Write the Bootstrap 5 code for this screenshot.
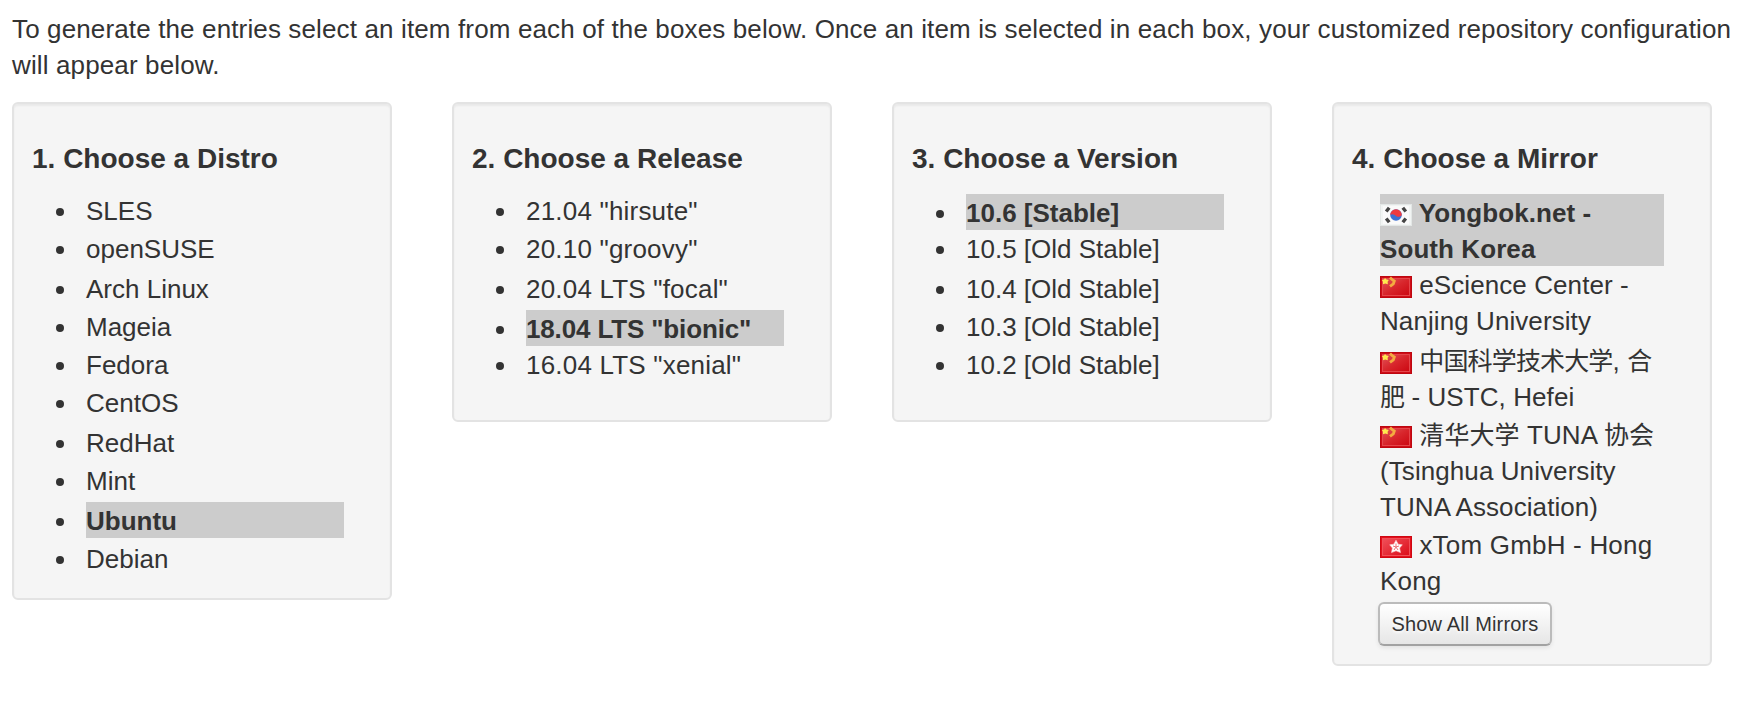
<!DOCTYPE html>
<html lang="en">
<head>
  <meta charset="UTF-8">
  <meta name="viewport" content="width=device-width, initial-scale=1.0">
  <title>Repository Configuration</title>
  <link href="https://cdn.jsdelivr.net/npm/bootstrap@5.3.0/dist/css/bootstrap.min.css" rel="stylesheet">
  <style>
    body {
      font-family: "Liberation Sans", "Noto Sans CJK SC", sans-serif;
      font-size: 26px;
      line-height: 36px;
      color: #333;
      background: #fff;
    }

    .intro {
      padding: 11px 12px 0;
      margin-bottom: 19px;
      letter-spacing: .133px;
    }

    .chooser {
      padding-left: 12px;
      padding-right: 48px;
    }

    .well {
      min-height: 320px;
      padding: 37px 46px 20px 18px;
      background: #f5f5f5;
      border: 2px solid #e3e3e3;
      border-radius: 6px;
      box-shadow: inset 0 2px 2px rgba(0, 0, 0, .05);
    }

    .well h3 {
      font-size: 28px;
      line-height: 36px;
      font-weight: bold;
      margin: 0 -40px 15px 0;
      white-space: nowrap;
    }

    .choices {
      padding-left: 24px;
    }

    .choices li {
      height: 38px;
    }

    .choices li:nth-child(2),
    .choices li:nth-child(6),
    .choices li:nth-child(9) {
      height: 40px;
    }

    .choices li::before {
      content: "";
      width: 8px;
      height: 8px;
      margin: 16px 22px 0 0;
      border-radius: 50%;
      background: #333;
    }

    .choices span {
      height: 36px;
      padding-top: 1px;
      white-space: nowrap;
    }

    .choices .picked {
      padding-top: 2px;
    }

    .picked span,
    .mirrors .picked {
      background: #ccc;
      font-weight: bold;
    }

    .releases {
      letter-spacing: .2px;
    }

    .releases .picked {
      letter-spacing: -.15px;
    }

    .mirrors {
      padding: 2px 0 0 28px;
      margin-bottom: 4px;
      letter-spacing: .08px;
    }

    .mirrors li {
      height: 72px;
      padding-top: 1px;
    }

    .mirrors .nju { height: 76px; }
    .mirrors .ustc { height: 74px; }
    .mirrors .tuna { height: 110px; }
    .mirrors .xtom { letter-spacing: .2px; }

    .flag {
      width: 32px;
      height: 22px;
      vertical-align: -4px;
    }

    .soft {
      filter: blur(.6px);
    }

    .han {
      font-family: "Noto Sans CJK SC", sans-serif;
      font-size: 25px;
      line-height: 1;
    }

    .ustc .han {
      letter-spacing: -.85px;
    }

    .tuna .han {
      letter-spacing: .1px;
    }

    .btn-mirrors {
      width: 174px;
      height: 44px;
      margin-left: 26px;
      margin-bottom: 18px;
      padding: 1px 0 0;
      font-size: 20px;
      line-height: 39px;
      letter-spacing: .16px;
      color: #333;
      text-shadow: 0 2px 2px rgba(255, 255, 255, .75);
      background: linear-gradient(#fff, #e6e6e6);
      border: 2px solid #bbb;
      border-bottom-color: #a2a2a2;
      border-radius: 6px;
      box-shadow: 0 2px 4px rgba(0, 0, 0, .08);
    }
  </style>
</head>
<body>

<!-- flag shapes -->
<svg class="position-absolute" width="0" height="0">
  <defs>
    <linearGradient id="redShade" x1="0" y1="0" x2="1" y2="1">
      <stop offset="0" stop-color="#e0555a"/>
      <stop offset=".5" stop-color="#d8262c"/>
      <stop offset="1" stop-color="#cc0812"/>
    </linearGradient>
    <linearGradient id="hkShade" x1="0" y1="0" x2="1" y2="1">
      <stop offset="0" stop-color="#f0505a"/>
      <stop offset="1" stop-color="#dc0c18"/>
    </linearGradient>
  </defs>
  <symbol id="flagKr" viewBox="0 0 32 22">
    <rect width="32" height="22" fill="#e3e7e6"/>
    <rect x="1" y="1" width="30" height="20" fill="#f1f4f3"/>
    <rect x="3" y="2" width="26" height="18" fill="#fafafa"/>
    <g class="soft">
      <path d="M6.200 7.500 9.200 3.800M22.800 3.800l3 3.700M6.200 14.500l3 3.700M22.800 18.200l3-3.700" stroke="#444" stroke-width="3.400"/>
      <circle cx="16" cy="11" r="5.800" fill="#3e70d2"/>
      <path d="M10.200 11a5.800 5.800 0 0 1 11.600 0c-1 1.600-3.600 2.600-5.400 1.200-1.800-1.600-4.600-2.800-6.200-1.200z" fill="#ee3b40"/>
    </g>
  </symbol>
  <symbol id="flagCn" viewBox="0 0 32 22">
    <rect width="32" height="22" fill="#bd0710"/>
    <rect x="1" y="1" width="30" height="20" fill="#cf0d17"/>
    <rect x="2.500" y="2.500" width="27" height="17" fill="url(#redShade)" stroke="#e4474c" stroke-width="1"/>
    <g class="soft">
      <path d="M5 2 6.500 3.500 8.800 4 7.600 5.800 7.800 8.200 5.300 7.600 3 8.200 3 5.800 1.800 4 4 3.500z" fill="#ffe94e"/>
      <path d="M10 1.500 12 3.500 14.300 5 13.300 8 10 10.400" fill="none" stroke="#f4ac40" stroke-width="2.800"/>
    </g>
  </symbol>
  <symbol id="flagHk" viewBox="0 0 32 22">
    <rect width="32" height="22" fill="#cf0712"/>
    <rect x="1" y="1" width="30" height="20" fill="#e3101c"/>
    <rect x="2.500" y="2.500" width="27" height="17" fill="url(#hkShade)" stroke="#f05058" stroke-width="1"/>
    <g class="soft">
      <path d="M16 4.200 18.200 8.200 22.300 8.800 19.600 12 20.500 16.600 16 14.800 11.500 16.600 12.400 12 9.700 8.800 13.800 8.200z" fill="#fff" stroke="#fbd3d4" stroke-width=".6"/>
      <path d="M16 7.500v3.500l3-1M16 11l2 3M16 11l-2 3M16 11l-3-1" fill="none" stroke="#ee7279" stroke-width="1"/>
    </g>
  </symbol>
</svg>

<p class="intro">To generate the entries select an item from each of the boxes below. Once an item is selected in each box, your customized repository configuration will appear below.</p>

<div class="row g-0 align-items-start">
  <div class="col-3 chooser">
    <div class="well">
      <h3>1. Choose a Distro</h3>
      <ul class="choices list-unstyled mb-0">
        <li class="d-flex"><span class="flex-fill">SLES</span></li>
        <li class="d-flex"><span class="flex-fill">openSUSE</span></li>
        <li class="d-flex"><span class="flex-fill">Arch Linux</span></li>
        <li class="d-flex"><span class="flex-fill">Mageia</span></li>
        <li class="d-flex"><span class="flex-fill">Fedora</span></li>
        <li class="d-flex"><span class="flex-fill">CentOS</span></li>
        <li class="d-flex"><span class="flex-fill">RedHat</span></li>
        <li class="d-flex"><span class="flex-fill">Mint</span></li>
        <li class="d-flex picked"><span class="flex-fill">Ubuntu</span></li>
        <li class="d-flex"><span class="flex-fill">Debian</span></li>
      </ul>
    </div>
  </div>

  <div class="col-3 chooser">
    <div class="well">
      <h3>2. Choose a Release</h3>
      <ul class="choices releases list-unstyled mb-0">
        <li class="d-flex"><span class="flex-fill">21.04 "hirsute"</span></li>
        <li class="d-flex"><span class="flex-fill">20.10 "groovy"</span></li>
        <li class="d-flex"><span class="flex-fill">20.04 LTS "focal"</span></li>
        <li class="d-flex picked"><span class="flex-fill">18.04 LTS "bionic"</span></li>
        <li class="d-flex"><span class="flex-fill">16.04 LTS "xenial"</span></li>
      </ul>
    </div>
  </div>

  <div class="col-3 chooser">
    <div class="well">
      <h3>3. Choose a Version</h3>
      <ul class="choices list-unstyled mb-0">
        <li class="d-flex picked"><span class="flex-fill">10.6 [Stable]</span></li>
        <li class="d-flex"><span class="flex-fill">10.5 [Old Stable]</span></li>
        <li class="d-flex"><span class="flex-fill">10.4 [Old Stable]</span></li>
        <li class="d-flex"><span class="flex-fill">10.3 [Old Stable]</span></li>
        <li class="d-flex"><span class="flex-fill">10.2 [Old Stable]</span></li>
      </ul>
    </div>
  </div>

  <div class="col-3 chooser">
    <div class="well pb-0">
      <h3>4. Choose a Mirror</h3>
      <ul class="mirrors list-unstyled">
        <li class="picked"><svg class="flag"><use href="#flagKr"/></svg> Yongbok.net - South Korea</li>
        <li class="nju"><svg class="flag"><use href="#flagCn"/></svg> eScience Center - Nanjing University</li>
        <li class="ustc"><svg class="flag"><use href="#flagCn"/></svg> <span class="han">中国科学技术大学</span>, <span class="han">合<br>肥</span> - USTC, Hefei</li>
        <li class="tuna"><svg class="flag"><use href="#flagCn"/></svg> <span class="han">清华大学</span> TUNA <span class="han">协会</span> (Tsinghua University TUNA Association)</li>
        <li class="xtom"><svg class="flag"><use href="#flagHk"/></svg> xTom GmbH - Hong Kong</li>
      </ul>
      <button type="button" class="btn btn-mirrors d-block">Show All Mirrors</button>
    </div>
  </div>
</div>

<script src="https://cdn.jsdelivr.net/npm/bootstrap@5.3.0/dist/js/bootstrap.bundle.min.js"></script>
</body>
</html>
